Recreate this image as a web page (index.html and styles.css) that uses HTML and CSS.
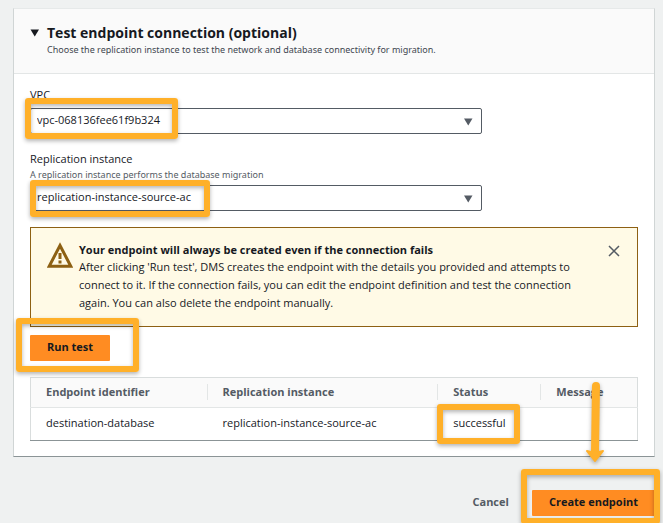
FILE: index.html
```html
<!DOCTYPE html>
<html lang="en">
  <head>
    <meta charset="UTF-8" />
    <meta name="viewport" content="width=device-width, initial-scale=1.0" />
    <title>Create endpoint</title>
    <link rel="stylesheet" href="styles.css">
  </head>
  <body>
    <main class="page">
      <section class="card">
        <header class="card-header">
          <button class="toggle" type="button" aria-label="Collapse section">
            <svg width="10" height="8" viewBox="0 0 10 8"><path d="M0.5 0.5h8.500L4.750 7.500z" fill="#16191f" /></svg>
          </button>
          <div>
            <h2>Test endpoint connection (optional)</h2>
            <p>Choose the replication instance to test the network and database connectivity for migration.</p>
          </div>
        </header>

        <div class="card-body">
          <div class="field">
            <label for="vpc">VPC</label>
            <div class="select-wrap">
              <select id="vpc">
                <option>vpc-068136fee61f9b324</option>
              </select>
              <svg class="caret" width="10" height="8" viewBox="0 0 10 8"><path d="M1 0.5h8.500L5.250 7.500z" fill="#545b64" /></svg>
              <span class="highlight highlight-vpc"></span>
            </div>
          </div>

          <div class="field">
            <label for="instance">Replication instance</label>
            <p class="hint">A replication instance performs the database migration</p>
            <div class="select-wrap">
              <select id="instance">
                <option>replication-instance-source-ac</option>
              </select>
              <svg class="caret" width="10" height="8" viewBox="0 0 10 8"><path d="M1 0.5h8.500L5.250 7.500z" fill="#545b64" /></svg>
              <span class="highlight highlight-instance"></span>
            </div>
          </div>

          <div class="alert">
            <svg class="alert-icon" width="26" height="28" viewBox="0 0 26 28">
              <path d="M13 4.500L23.800 25.200H2.200z" fill="none" stroke="#8d6013" stroke-width="3" />
              <path d="M13 12v6M13 19.500v3" stroke="#8d6013" stroke-width="3" />
            </svg>
            <div class="alert-text">
              <strong>Your endpoint will always be created even if the connection fails</strong>
              <p>After clicking 'Run test', DMS creates the endpoint with the details you provided and attempts to connect to it. If the connection fails, you can edit the endpoint definition and test the connection again. You can also delete the endpoint manually.</p>
            </div>
            <button class="close" type="button" aria-label="Dismiss">
              <svg width="12" height="12" viewBox="0 0 12 12"><path d="M1 1l10 10M11 1L1 11" stroke="#545b64" stroke-width="1.500" /></svg>
            </button>
          </div>

          <div class="run">
            <button class="btn-primary" type="button">Run test</button>
            <span class="highlight highlight-run"></span>
          </div>

          <table>
            <thead>
              <tr>
                <th class="col-id"><span>Endpoint identifier</span></th>
                <th class="col-instance"><span>Replication instance</span></th>
                <th class="col-status"><span>Status</span></th>
                <th><span>Message</span></th>
              </tr>
            </thead>
            <tbody>
              <tr>
                <td>destination-database</td>
                <td>replication-instance-source-ac</td>
                <td class="status">successful<span class="highlight highlight-status"></span></td>
                <td></td>
              </tr>
            </tbody>
          </table>
        </div>
      </section>

      <footer class="actions">
        <button class="btn-link" type="button">Cancel</button>
        <div class="create">
          <button class="btn-primary" type="button">Create endpoint</button>
          <span class="highlight highlight-create"></span>
          <svg class="arrow" width="20" height="84" viewBox="0 0 20 84">
            <path d="M11 6L10 72" stroke="#ffb029" stroke-width="8" stroke-linecap="round" />
            <path d="M2 71l8 2 8-2-8 10z" fill="#ffb029" stroke="#ffb029" stroke-width="2" stroke-linejoin="round" />
          </svg>
        </div>
      </footer>
    </main>
  </body>
</html>
```

FILE: styles.css
```css
* {
  box-sizing: border-box;
}
body {
  margin: 0;
  background-color: #eff1f1;
  font-family: "Open Sans", "Noto Sans", sans-serif;
  font-size: 11px;
  line-height: 18px;
  color: #16191f;
}
h2,
p {
  margin: 0;
}
button,
select {
  font: inherit;
  color: inherit;
}
button {
  cursor: pointer;
}
.page {
  min-height: 100vh;
  padding: 8px 8px 8px 13px;
  overflow: hidden;
}
.card {
  background-color: #fff;
  border: 1px solid #d0d5d5;
  border-top-color: #e6e9e9;
  border-bottom-color: #8b9496;
}
.card-header {
  display: flex;
  gap: 7px;
  padding: 15px 16px;
  background-color: #fafafa;
  border-bottom: 1px solid #e3e6e6;
}
.card-header h2 {
  font-size: 14px;
  line-height: 18px;
}
.card-header p {
  font-family: "Noto Sans", sans-serif;
  font-size: 9px;
  line-height: 16px;
  color: #414750;
}
.toggle {
  display: flex;
  align-items: center;
  height: 18px;
  padding: 0;
  border: 0;
  background: none;
}
.card-body {
  padding: 12px 16px 15px;
}
.field {
  margin-bottom: 16px;
}
.field label {
  display: block;
}
.hint {
  font-family: "Noto Sans", sans-serif;
  font-size: 9px;
  line-height: 13px;
  color: #545b64;
}
.select-wrap {
  position: relative;
  width: 452px;
  max-width: 100%;
  margin-top: 4px;
}
select {
  display: block;
  width: 100%;
  height: 26px;
  padding: 0 24px 2px 6px;
  border: 1px solid #545b64;
  border-radius: 2px;
  background-color: #fff;
  appearance: none;
}
.caret {
  position: absolute;
  top: 10px;
  right: 9px;
  pointer-events: none;
}
.alert {
  display: flex;
  align-items: flex-start;
  gap: 6px;
  min-height: 100px;
  padding: 13px 16px;
  background-color: #fffae6;
  border: 1px solid #8d6013;
}
.alert-icon {
  flex: none;
}
.alert-text {
  flex: 1;
  padding-right: 26px;
}
.alert-text strong {
  display: block;
  line-height: 17px;
}
.close {
  display: flex;
  padding: 4px 1px;
  border: 0;
  background: none;
}
.run {
  position: relative;
  display: flex;
  margin: 8px 0 16px;
}
.btn-primary,
.btn-link {
  height: 26px;
  padding: 0 17px 2px;
  border: 0;
  font-weight: bold;
}
.btn-primary {
  background-color: #ff8c22;
  border-radius: 1px;
}
.btn-link {
  background: none;
  color: #545b64;
}
table {
  width: 100%;
  table-layout: fixed;
  border-collapse: collapse;
  border: 1px solid #d9dddd;
  border-bottom-color: #8b9496;
}
th,
td {
  padding: 0 16px 2px;
  text-align: left;
}
th:first-child,
td:first-child {
  padding-left: 15px;
}
th {
  height: 30px;
  background-color: #fafafa;
  border-bottom: 1px solid #e3e6e6;
  color: #545b64;
}
th span {
  display: block;
  line-height: 16px;
}
th + th {
  padding-left: 0;
}
th + th span {
  padding-left: 15px;
  border-left: 1px solid #e3e6e6;
}
td {
  height: 33px;
}
.col-id {
  width: 29%;
}
.col-instance {
  width: 38%;
}
.col-status {
  width: 17%;
}
.status {
  position: relative;
}
.actions {
  display: flex;
  justify-content: flex-end;
  gap: 6px;
  margin-top: 33px;
}
.create {
  position: relative;
}

/* callouts drawn over the form */
.highlight {
  position: absolute;
  border: 6px solid #ffb029;
  border-radius: 3px;
  box-shadow: 0 2px 4px rgba(0, 0, 0, 0.3), inset 0 2px 4px rgba(0, 0, 0, 0.3);
  pointer-events: none;
}
.highlight-vpc {
  top: -10px;
  left: -5px;
  width: 153px;
  height: 41px;
}
.highlight-instance {
  top: -5px;
  left: 0;
  width: 180px;
  height: 37px;
}
.highlight-run {
  top: -17px;
  left: -14px;
  width: 123px;
  height: 54px;
}
.highlight-status {
  top: -4px;
  left: 0;
  width: 83px;
  height: 40px;
}
.highlight-create {
  top: -21px;
  right: -5px;
  bottom: -8px;
  left: -11px;
}
.arrow {
  position: absolute;
  right: 50px;
  bottom: 52px;
  filter: drop-shadow(0 2px 2px rgba(0, 0, 0, 0.3));
  pointer-events: none;
}
```
